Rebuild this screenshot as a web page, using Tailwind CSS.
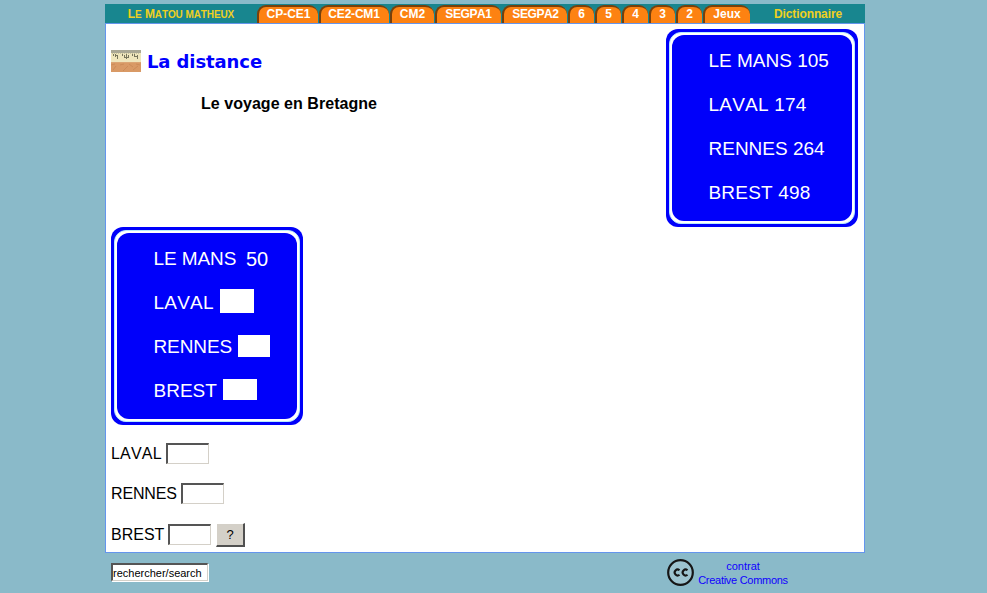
<!DOCTYPE html>
<html lang="fr">
<head>
<meta charset="utf-8">
<title>La distance</title>
<script src="https://cdn.jsdelivr.net/npm/@tailwindcss/browser@4"></script>
</head>
<body class="bg-[#8abac9] h-[593px] overflow-hidden pt-1 pl-[105px] font-['Liberation_Sans',Arial,sans-serif] text-black [font-kerning:none]">
<div class="w-[760px]">
  <nav class="h-[19px] bg-[#18868f] flex items-end text-[12px] leading-[17px] font-bold text-white text-center whitespace-nowrap">
    <a class="w-[152px] h-[18px] leading-[19px] text-[#f0d020] uppercase tracking-[-0.1px]">L<span class="text-[10px]">e</span> M<span class="text-[10px]">atou matheux</span></a>
    <div class="flex gap-px">
      <a class="w-[61px] h-[18px] leading-[15px] bg-[#fd8212] border-t-2 border-l-2 border-[#77400c] rounded-t-[9px]">CP-CE1</a>
      <a class="w-[70px] h-[18px] leading-[15px] bg-[#fd8212] border-t-2 border-l-2 border-[#77400c] rounded-t-[9px] pr-[2px] tracking-[-0.2px]">CE2-CM1</a>
      <a class="w-[44px] h-[18px] leading-[15px] bg-[#fd8212] border-t-2 border-l-2 border-[#77400c] rounded-t-[9px] pr-px">CM2</a>
      <a class="w-[66px] h-[18px] leading-[15px] bg-[#fd8212] border-t-2 border-l-2 border-[#77400c] rounded-t-[9px] pr-px tracking-[-0.4px]">SEGPA1</a>
      <a class="w-[65px] h-[18px] leading-[15px] bg-[#fd8212] border-t-2 border-l-2 border-[#77400c] rounded-t-[9px] tracking-[-0.4px]">SEGPA2</a>
      <a class="w-[26px] h-[18px] leading-[15px] bg-[#fd8212] border-t-2 border-l-2 border-[#77400c] rounded-t-[9px] pr-px">6</a>
      <a class="w-[26px] h-[18px] leading-[15px] bg-[#fd8212] border-t-2 border-l-2 border-[#77400c] rounded-t-[9px] pr-px">5</a>
      <a class="w-[26px] h-[18px] leading-[15px] bg-[#fd8212] border-t-2 border-l-2 border-[#77400c] rounded-t-[9px] pr-px">4</a>
      <a class="w-[26px] h-[18px] leading-[15px] bg-[#fd8212] border-t-2 border-l-2 border-[#77400c] rounded-t-[9px] pr-px">3</a>
      <a class="w-[26px] h-[18px] leading-[15px] bg-[#fd8212] border-t-2 border-l-2 border-[#77400c] rounded-t-[9px] pr-px">2</a>
      <a class="w-[47px] h-[18px] leading-[15px] bg-[#fd8212] border-t-2 border-l-2 border-[#77400c] rounded-t-[9px] pr-px">Jeux</a>
    </div>
    <a class="flex-1 h-[18px] leading-[19px] text-[#f0d020] pl-px tracking-[-0.1px]">Dictionnaire</a>
  </nav>

  <main class="h-[530px] bg-white border border-[#6495ed] pl-[5px] pr-[6px] pt-[5px]">
    <div class="flex justify-between h-[198px]">
      <div>
        <h1 class="flex items-center gap-[6px] mt-[20px] h-[24px] text-[18px] font-bold text-[#0000ff] font-['DejaVu_Sans',Verdana,sans-serif]">
          <svg class="w-[30px] h-[22px] shrink-0" viewBox="0 0 30 22">
            <rect width="30" height="22" fill="#d99a66"/>
            <rect width="30" height="12" fill="#efe6bc"/>
            <rect width="30" height="3" fill="#aaa895"/>
            <path d="M1 3.5h28" stroke="#c9c4a0" stroke-dasharray="1 1"/>
            <path d="M2.500 4v2M4.500 4v3M6.500 5v4M11.500 4v2M13.500 5v3M15.500 4v5M17.500 5v3M21.500 4v2M23.500 4v3M26.500 5v4M5 5.500h2M14 7.500h3M24 6.500h2" stroke="#77755c" fill="none"/>
            <path d="M0 12.5h30" stroke="#dba574"/>
            <path d="M2 20l3-4M9 15l4-1M12 21l5-5M18 14l4 3M22 20l5-4M0 15l4-1M25 14l4 1" stroke="#cc8c59" fill="none"/>
          </svg>
          <span class="tracking-[-0.1px]">La distance</span>
        </h1>
        <h2 class="pl-[90px] mt-[21px] text-[16px] leading-[20px] font-bold tracking-[0.04px]">Le voyage en Bretagne</h2>
      </div>
      <div class="w-[192px] h-[198px] bg-[#0000fa] rounded-[12px] p-[3px]">
        <div class="w-full h-full bg-white border border-[#b7eaff] rounded-[12px] p-[2px]">
          <div class="w-full h-full bg-[#0000fa] rounded-[12px] pl-[36.5px] pt-[4px] text-[19px] leading-[44px] text-white whitespace-nowrap">
            <p>LE MANS 105</p>
            <p class="tracking-[0.2px]">LAVAL 174</p>
            <p>RENNES 264</p>
            <p class="tracking-[0.2px]">BREST 498</p>
          </div>
        </div>
      </div>
    </div>

    <div class="w-[192px] h-[198px] bg-[#0000fa] rounded-[12px] p-[3px]">
      <div class="w-full h-full bg-white border border-[#b7eaff] rounded-[12px] p-[2px]">
        <div class="w-full h-full bg-[#0000fa] rounded-[12px] pl-[37px] pt-[4px] text-[19px] leading-[44px] text-white whitespace-nowrap">
          <p class="flex h-[44px]"><span class="w-[92px] -ml-[0.5px] mr-[0.5px] tracking-[-0.1px]">LE MANS</span><span class="text-[20px]">50</span></p>
          <p class="flex h-[44px]"><span class="w-[66px] -ml-[0.5px] mr-[0.5px] tracking-[0.2px]">LAVAL</span><span class="w-[34px] h-[24px] mt-[8px] bg-white"></span></p>
          <p class="flex h-[44px]"><span class="w-[84px] -ml-[0.5px] mr-[0.5px] tracking-[-0.1px]">RENNES</span><span class="w-[32px] h-[22px] mt-[10px] bg-white"></span></p>
          <p class="flex h-[44px]"><span class="w-[69px] -ml-[0.5px] mr-[0.5px]">BREST</span><span class="w-[34px] h-[21px] mt-[10px] bg-white"></span></p>
        </div>
      </div>
    </div>

    <form class="pt-[18px] text-[16px] leading-[21px]">
      <div class="flex h-[40px]"><label class="w-[55px] tracking-[0.2px]">LAVAL</label><input class="w-[43px] h-[21px] bg-white border-t-2 border-l-2 border-r border-b border-t-[#555] border-l-[#555] border-r-[#d4d0c8] border-b-[#d4d0c8]"></div>
      <div class="flex h-[41px]"><label class="w-[70px] tracking-[-0.15px]">RENNES</label><input class="w-[43px] h-[21px] bg-white border-t-2 border-l-2 border-r border-b border-t-[#555] border-l-[#555] border-r-[#d4d0c8] border-b-[#d4d0c8]"></div>
      <div class="flex h-[24px]"><label class="w-[57px]">BREST</label><input class="w-[43px] h-[21px] bg-white border-t-2 border-l-2 border-r border-b border-t-[#555] border-l-[#555] border-r-[#d4d0c8] border-b-[#d4d0c8]"><button type="button" class="ml-[5px] -mt-px w-[29px] h-[24px] bg-[#d4d0c8] border-t border-l border-r-2 border-b-2 border-t-white border-l-white border-r-[#505050] border-b-[#505050] text-[13px] leading-[20px]">?</button></div>
    </form>
  </main>

  <footer class="flex pt-[6px] pl-[6px]">
    <input value="rechercher/search" class="mt-[4px] w-[97px] h-[18px] bg-white border-t-2 border-l-2 border-r border-b border-t-[#555] border-l-[#555] border-r-[#d4d0c8] border-b-[#d4d0c8] text-[11px] shadow-[1px_1px_0_#fff]">
    <svg class="ml-[459px] w-[27px] h-[27px]" viewBox="0 0 27 27">
      <circle cx="13.5" cy="13.5" r="12.3" fill="#9dc4d0" stroke="#161616" stroke-width="2.2"/>
      <path d="M12.500 11.300a2.900 2.900 0 1 0 0 4.400M20.500 11.300a2.900 2.900 0 1 0 0 4.400" fill="none" stroke="#161616" stroke-width="2.1"/>
    </svg>
    <a class="ml-[4px] w-[90px] text-center text-[11px] leading-[14px] text-[#1000ff] whitespace-nowrap">contrat<br><span class="tracking-[-0.28px]">Creative Commons</span></a>
  </footer>
</div>
</body>
</html>
